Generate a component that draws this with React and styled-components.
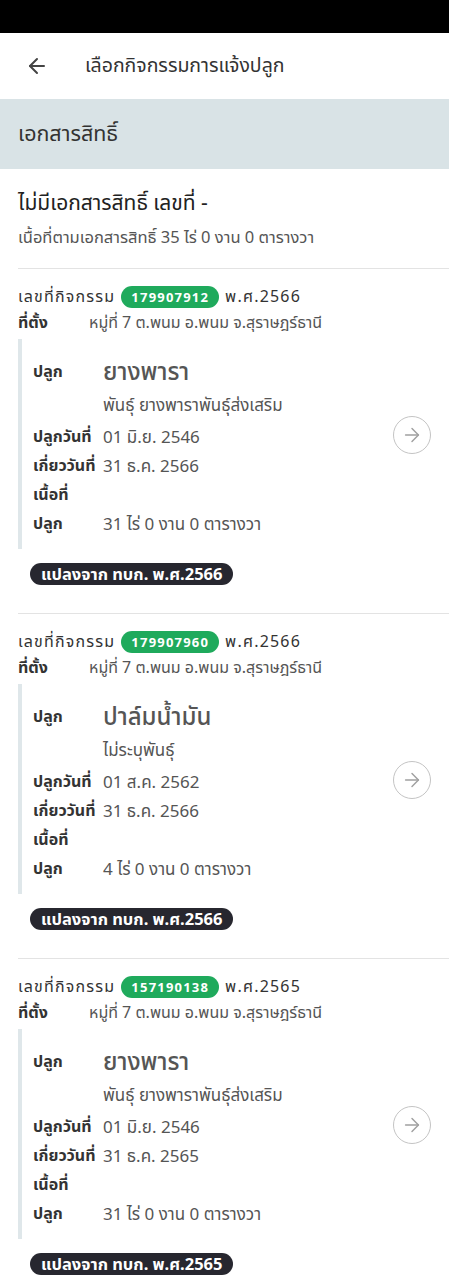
import React from 'react';
import styled, { createGlobalStyle } from 'styled-components';
import { ArrowLeft, ArrowRight } from 'lucide-react';

const GlobalStyle = createGlobalStyle`
  body {
    margin: 0;
    background: #fff;
    font-family: 'Noto Sans', 'Noto Sans Thai', 'Liberation Sans', sans-serif;
    color: #333;
  }
`;

const StatusBar = styled.div`
  height: 33px;
  background: #000;
`;

const Header = styled.header`
  height: 66px;
  display: flex;
  align-items: center;
  padding-left: 25px;
  gap: 36px;
  color: #444;
`;

const HeaderTitle = styled.h1`
  margin: 0;
  font-size: 19.5px;
  font-weight: 400;
  color: #333;
`;

const SectionBand = styled.div`
  height: 70px;
  display: flex;
  align-items: center;
  padding-left: 18px;
  background: #d9e3e6;
  font-size: 21.5px;
  color: #333;
`;

const DocBlock = styled.div`
  padding: 16px 18px 0;
  height: 83px;
`;

const DocTitle = styled.div`
  font-size: 21px;
  line-height: 34px;
  color: #222;
`;

const DocSub = styled.div`
  font-size: 16.5px;
  line-height: 36px;
  color: #555;
`;

const List = styled.div`
  padding-left: 18px;
`;

const Card = styled.div`
  display: flex;
  align-items: center;
  border-top: 1px solid #e3e3e3;
  padding: 16px 18px 28px 0;
`;

const CardBody = styled.div`
  flex: 1;
`;

const HeadRow = styled.div`
  display: flex;
  align-items: center;
  height: 24px;
  gap: 6px;
  font-size: 16px;
  letter-spacing: 1.2px;
  color: #333;
`;

const IdBadge = styled.span`
  display: inline-flex;
  align-items: center;
  height: 22px;
  padding: 0 10px;
  border-radius: 11px;
  background: #1faa5c;
  color: #fff;
  font-size: 13px;
  font-weight: 700;
  letter-spacing: 1.2px;
`;

const InfoRow = styled.div`
  display: flex;
  align-items: ${({ $end }) => ($end ? 'flex-end' : 'center')};
  font-size: 16px;
  line-height: ${({ $lh }) => $lh || 29}px;
`;

const Label = styled.span`
  flex: 0 0 ${({ $w }) => $w || 70}px;
  font-weight: 700;
  color: #333;
`;

const Value = styled.span`
  color: #555;
  font-size: ${({ $size }) => $size || 17}px;
  font-weight: ${({ $size }) => ($size > 20 ? 500 : 400)};
`;

const DetailBox = styled.div`
  margin-top: 4px;
  border-left: 4px solid #dfe7ea;
  padding: 15px 0 11px 11px;
`;

const FromBadge = styled.span`
  display: inline-flex;
  align-items: center;
  height: 22px;
  margin: 14px 0 0 12px;
  padding: 0 11px;
  border-radius: 11px;
  background: #27272f;
  color: #fff;
  font-size: 16.5px;
  font-weight: 700;
`;

const GoButton = styled.button`
  flex: 0 0 38px;
  width: 38px;
  height: 38px;
  border-radius: 50%;
  border: 1px solid #c4c4c4;
  background: #fff;
  color: #a0a0a0;
  display: flex;
  align-items: center;
  justify-content: center;
  padding: 0;
`;

const activities = [
  {
    id: '179907912',
    year: '2566',
    location: 'หมู่ที่ 7 ต.พนม อ.พนม จ.สุราษฎร์ธานี',
    crop: 'ยางพารา',
    variety: 'พันธุ์ ยางพาราพันธุ์ส่งเสริม',
    plantDate: '01 มิ.ย. 2546',
    harvestDate: '31 ธ.ค. 2566',
    area: '31 ไร่ 0 งาน 0 ตารางวา',
    source: 'แปลงจาก ทบก. พ.ศ.2566',
  },
  {
    id: '179907960',
    year: '2566',
    location: 'หมู่ที่ 7 ต.พนม อ.พนม จ.สุราษฎร์ธานี',
    crop: 'ปาล์มน้ำมัน',
    variety: 'ไม่ระบุพันธุ์',
    plantDate: '01 ส.ค. 2562',
    harvestDate: '31 ธ.ค. 2566',
    area: '4 ไร่ 0 งาน 0 ตารางวา',
    source: 'แปลงจาก ทบก. พ.ศ.2566',
  },
  {
    id: '157190138',
    year: '2565',
    location: 'หมู่ที่ 7 ต.พนม อ.พนม จ.สุราษฎร์ธานี',
    crop: 'ยางพารา',
    variety: 'พันธุ์ ยางพาราพันธุ์ส่งเสริม',
    plantDate: '01 มิ.ย. 2546',
    harvestDate: '31 ธ.ค. 2565',
    area: '31 ไร่ 0 งาน 0 ตารางวา',
    source: 'แปลงจาก ทบก. พ.ศ.2565',
  },
];

const ActivityCard = ({ item }) => (
  <Card>
    <CardBody>
      <HeadRow>
        <span>เลขที่กิจกรรม</span>
        <IdBadge>{item.id}</IdBadge>
        <span>พ.ศ.{item.year}</span>
      </HeadRow>
      <InfoRow $lh={26}>
        <Label $w={71}>ที่ตั้ง</Label>
        <Value $size={16}>{item.location}</Value>
      </InfoRow>
      <DetailBox>
        <InfoRow $lh={34}>
          <Label>ปลูก</Label>
          <Value $size={24}>{item.crop}</Value>
        </InfoRow>
        <InfoRow $lh={34}>
          <Label />
          <Value>{item.variety}</Value>
        </InfoRow>
        <InfoRow>
          <Label>ปลูกวันที่</Label>
          <Value>{item.plantDate}</Value>
        </InfoRow>
        <InfoRow>
          <Label>เกี่ยววันที่</Label>
          <Value>{item.harvestDate}</Value>
        </InfoRow>
        <InfoRow $end>
          <Label>เนื้อที่<br />ปลูก</Label>
          <Value>{item.area}</Value>
        </InfoRow>
      </DetailBox>
      <FromBadge>{item.source}</FromBadge>
    </CardBody>
    <GoButton aria-label="เลือก">
      <ArrowRight size={22} strokeWidth={1.6} />
    </GoButton>
  </Card>
);

const App = () => (
  <>
    <GlobalStyle />
    <StatusBar />
    <Header>
      <ArrowLeft size={24} strokeWidth={2} />
      <HeaderTitle>เลือกกิจกรรมการแจ้งปลูก</HeaderTitle>
    </Header>
    <SectionBand>เอกสารสิทธิ์</SectionBand>
    <DocBlock>
      <DocTitle>ไม่มีเอกสารสิทธิ์ เลขที่ -</DocTitle>
      <DocSub>เนื้อที่ตามเอกสารสิทธิ์ 35 ไร่ 0 งาน 0 ตารางวา</DocSub>
    </DocBlock>
    <List>
      {activities.map((item) => (
        <ActivityCard key={item.id} item={item} />
      ))}
    </List>
  </>
);

export default App;
